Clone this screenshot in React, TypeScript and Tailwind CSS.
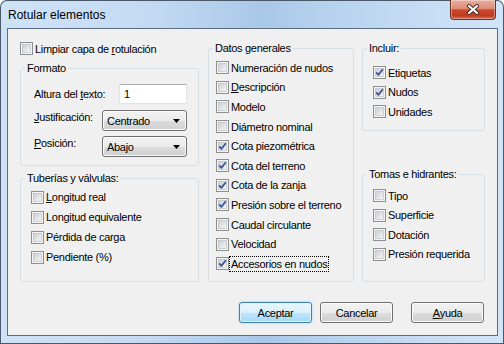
import React from "react";

function Check({ checked }: { checked?: boolean }) {
  return (
    <svg width="13" height="13" viewBox="0 0 13 13" className="shrink-0">
      <defs>
        <linearGradient id="cbg" x1="0" y1="0" x2="1" y2="1">
          <stop offset="0" stopColor="#c9cdd3" />
          <stop offset="1" stopColor="#f7f7f7" />
        </linearGradient>
      </defs>
      <rect x="0.5" y="0.5" width="12" height="12" fill="#f4f4f4" stroke="#8e8f8f" />
      <rect x="2.5" y="2.5" width="8" height="8" fill="url(#cbg)" stroke="#b5b9bf" strokeWidth="0.6" />
      {checked && (
        <path d="M3.2 6.4 L5.4 8.9 L9.8 3.2" fill="none" stroke="#3a579a" strokeWidth="1.8" strokeLinejoin="round" />
      )}
    </svg>
  );
}

function Row({
  label,
  checked,
  focus,
  h,
}: {
  label: React.ReactNode;
  checked?: boolean;
  focus?: boolean;
  h: string;
}) {
  return (
    <div className={`flex items-center ${h}`}>
      <Check checked={checked} />
      <span
        className={`border px-[1px] leading-[14px] whitespace-nowrap ${
          focus ? "border-dotted border-black" : "border-transparent"
        }`}
      >
        {label}
      </span>
    </div>
  );
}

function Group({
  legend,
  className,
  children,
}: {
  legend: string;
  className: string;
  children: React.ReactNode;
}) {
  return (
    <fieldset className={`border border-[#d5dfe5] rounded-[3px] ${className}`}>
      <legend className="ml-[4px] px-[2px] leading-[14px]">{legend}</legend>
      {children}
    </fieldset>
  );
}

function Select({ value }: { value: string }) {
  return (
    <div className="flex items-center justify-between w-[85px] h-[21px] pl-[4px] pr-[6px] border border-[#707070] rounded-[3px] bg-[linear-gradient(180deg,#f2f2f2_0%,#ebebeb_50%,#dddddd_50%,#cfcfcf_100%)] shadow-[inset_0_0_0_1px_#fcfcfc]">
      <span className="leading-[14px]">{value}</span>
      <svg width="7" height="4" viewBox="0 0 7 4">
        <path d="M0 0 H7 L3.5 4 Z" fill="#000" />
      </svg>
    </div>
  );
}

function Button({ children, primary, className = "" }: { children: React.ReactNode; primary?: boolean; className?: string }) {
  return (
    <div
      className={`flex items-center justify-center w-[73px] h-[21px] rounded-[3px] border leading-[14px] ${
        primary
          ? "border-[#3c7fb1] bg-[linear-gradient(180deg,#eaf6fd_0%,#d9f0fc_50%,#bee6fd_50%,#a7d9f5_100%)] shadow-[inset_0_0_0_1px_#e4f4fc,0_0_2px_#7fc4f0]"
          : "border-[#707070] bg-[linear-gradient(180deg,#f2f2f2_0%,#ebebeb_50%,#dddddd_50%,#cfcfcf_100%)] shadow-[inset_0_0_0_1px_#fcfcfc]"
      } ${className}`}
    >
      {children}
    </div>
  );
}

export default function App() {
  return (
    <div className="w-[504px] h-[344px] flex flex-col pl-[7px] pr-[6px] pb-[8px] rounded-t-[7px] bg-[linear-gradient(90deg,#cfe3f7_0%,#c3daf2_30%,#a9c8e8_52%,#b9d4ef_68%,#d2e5f8_100%)] shadow-[inset_0_0_0_1px_#4a586a] font-['Liberation_Sans',Arial,sans-serif] text-black">
      {/* title bar */}
      <div className="flex justify-between h-[28px] shrink-0">
        <div className="pl-[1px] pt-[8px] text-[12px] leading-[14px]">Rotular elementos</div>
        <div className="flex items-center justify-center w-[46px] h-[20px] mr-[2px] rounded-b-[4px] border border-t-0 border-[#6b2f24] bg-[linear-gradient(180deg,#eaae9e_0%,#dc8c76_45%,#c94b30_52%,#c13a1f_80%,#d4694b_100%)] shadow-[inset_0_0_0_1px_rgba(255,255,255,0.35)]">
          <svg width="14" height="11" viewBox="0 0 14 11">
            <path d="M3 2 L11 9 M11 2 L3 9" stroke="#4a2620" strokeWidth="4" strokeLinecap="round" />
            <path d="M3 2 L11 9 M11 2 L3 9" stroke="#ffffff" strokeWidth="2.2" strokeLinecap="round" />
          </svg>
        </div>
      </div>

      {/* client area */}
      <div className="w-[491px] h-[308px] border border-[#5d6e82] bg-[#f0f0f0] text-[11px] tracking-[-0.3px]">
        <div className="flex pl-[12px] pt-[12px]">
          {/* left column */}
          <div className="flex flex-col w-[179px]">
            <div className="mt-[1px]">
              <Row
                h="h-[13px]"
                label={
                  <>
                    Limpiar capa de <u>r</u>otulación
                  </>
                }
              />
            </div>
            <Group legend="Formato" className="mt-[6px] h-[105px]">
              <div className="pl-[13px] pt-[9px]">
                <div className="flex items-center h-[20px]">
                  <span className="w-[85px] leading-[14px]">
                    Altura del <u>t</u>exto:
                  </span>
                  <div className="w-[68px] h-[20px] flex items-center pl-[4px] bg-white border border-[#e2e3ea] border-t-[#abadb3] leading-[14px]">
                    1
                  </div>
                </div>
                <div className="flex items-start mt-[6px]">
                  <span className="w-[68px] leading-[14px]">
                    <u>J</u>ustificación:
                  </span>
                  <Select value="Centrado" />
                </div>
                <div className="flex items-start mt-[5px]">
                  <span className="w-[68px] leading-[14px]">
                    <u>P</u>osición:
                  </span>
                  <Select value="Abajo" />
                </div>
              </div>
            </Group>
            <Group legend="Tuberías y válvulas:" className="mt-[5px] h-[111px]">
              <div className="pl-[10px] pt-[2px]">
                <Row h="h-[20px]" label={<><u>L</u>ongitud real</>} />
                <Row h="h-[20px]" label="Longitud equivalente" />
                <Row h="h-[20px]" label="Pérdida de carga" />
                <Row h="h-[20px]" label="Pendiente (%)" />
              </div>
            </Group>
          </div>

          {/* middle column */}
          <Group legend="Datos generales" className="ml-[9px] w-[146px] h-[241px]">
            <div className="pl-[7px] pt-[3px]">
              <Row h="h-[19.6px]" label="Numeración de nudos" />
              <Row h="h-[19.6px]" label={<><u>D</u>escripción</>} />
              <Row h="h-[19.6px]" label="Modelo" />
              <Row h="h-[19.6px]" label="Diámetro nominal" />
              <Row h="h-[19.6px]" checked label="Cota piezométrica" />
              <Row h="h-[19.6px]" checked label="Cota del terreno" />
              <Row h="h-[19.6px]" checked label="Cota de la zanja" />
              <Row h="h-[19.6px]" checked label="Presión sobre el terreno" />
              <Row h="h-[19.6px]" label="Caudal circulante" />
              <Row h="h-[19.6px]" label="Velocidad" />
              <Row h="h-[19.6px]" checked focus label="Accesorios en nudos" />
            </div>
          </Group>

          {/* right column */}
          <div className="flex flex-col ml-[8px] w-[123px]">
            <Group legend="Incluir:" className="h-[90px]">
              <div className="pl-[10px] pt-[8px]">
                <Row h="h-[19.5px]" checked label="Etiquetas" />
                <Row h="h-[19.5px]" checked label="Nudos" />
                <Row h="h-[19.5px]" label="Unidades" />
              </div>
            </Group>
            <Group legend="Tomas e hidrantes:" className="mt-[36px] h-[115px]">
              <div className="pl-[10px] pt-[5px]">
                <Row h="h-[19.5px]" label="Tipo" />
                <Row h="h-[19.5px]" label="Superficie" />
                <Row h="h-[19.5px]" label="Dotación" />
                <Row h="h-[19.5px]" label="Presión requerida" />
              </div>
            </Group>
          </div>
        </div>

        {/* buttons */}
        <div className="flex justify-end pr-[13px] mt-[20px]">
          <Button primary>Aceptar</Button>
          <Button className="ml-[8px]">Cancelar</Button>
          <Button className="ml-[18px]">
            <u>A</u>yuda
          </Button>
        </div>
      </div>
    </div>
  );
}
